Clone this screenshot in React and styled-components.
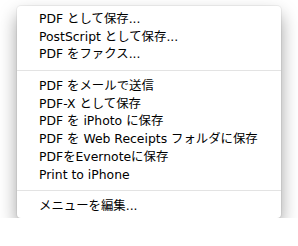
import React from "react";
import styled, { createGlobalStyle } from "styled-components";

const GlobalStyle = createGlobalStyle`
  html, body {
    margin: 0;
    background: #fff;
  }
`;

const groups = [
  ["PDF として保存...", "PostScript として保存...", "PDF をファクス..."],
  [
    "PDF をメールで送信",
    "PDF-X として保存",
    "PDF を iPhoto に保存",
    "PDF を Web Receipts フォルダに保存",
    "PDFをEvernoteに保存",
    "Print to iPhone",
  ],
  ["メニューを編集..."],
];

const Page = styled.div`
  padding: 6px 0 0 17px;
`;

const Menu = styled.ul`
  list-style: none;
  margin: 0;
  width: 264px;
  padding: 4px 0 3px;
  background: #fff;
  border-radius: 4px;
  box-shadow: 0 9px 18px rgba(0, 0, 0, 0.38), 0 0 0 1px rgba(0, 0, 0, 0.05);
  font-family: "DejaVu Sans", "Noto Sans CJK JP", sans-serif;
  font-size: 12.4px;
  color: #000;
`;

const Item = styled.li`
  height: 17.7px;
  line-height: 17.7px;
  padding-left: 22px;
  white-space: nowrap;
`;

const Separator = styled.li`
  height: 1px;
  margin: 7px 0 6px;
  background: #e3e3e3;
`;

export default function App() {
  return (
    <Page>
      <GlobalStyle />
      <Menu>
        {groups.map((group, gi) => (
          <React.Fragment key={gi}>
            {gi > 0 && <Separator />}
            {group.map((label) => (
              <Item key={label}>{label}</Item>
            ))}
          </React.Fragment>
        ))}
      </Menu>
    </Page>
  );
}
